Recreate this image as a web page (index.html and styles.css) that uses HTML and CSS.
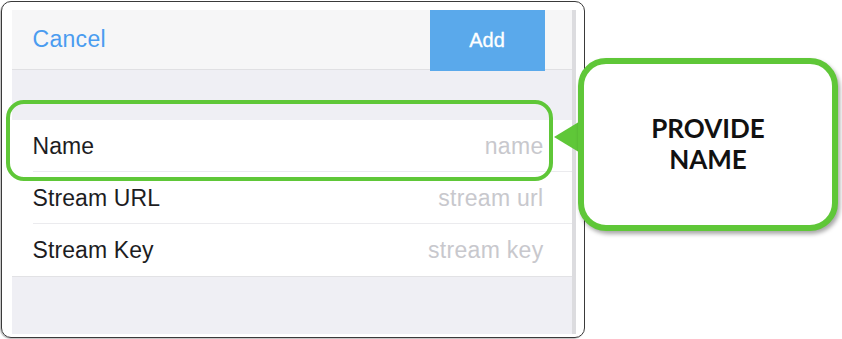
FILE: index.html
```html
<!DOCTYPE html>
<html>
<head>
<meta charset="utf-8">
<link rel="stylesheet" href="styles.css">
</head>
<body>
<div class="stage">
  <div class="frame">
    <div class="screen">
      <div class="nav">
        <span class="cancel">Cancel</span>
        <span class="add">Add</span>
      </div>
      <div class="gap"></div>
      <div class="list">
        <div class="row"><span class="label">Name</span><span class="ph">name</span></div>
        <div class="row"><span class="label">Stream URL</span><span class="ph">stream url</span></div>
        <div class="row last"><span class="label">Stream Key</span><span class="ph">stream key</span></div>
      </div>
      <div class="fill"></div>
    </div>
  </div>
  <div class="highlight"></div>
  <svg class="pointer" width="30" height="40" viewBox="0 0 30 40"><polygon points="0,18 28,1 28,35" fill="#5fc738"/></svg>
  <div class="callout"><p>PROVIDE<br>NAME</p></div>
</div>
</body>
</html>
```
FILE: styles.css
```css
html, body { margin: 0; padding: 0; background: #fff; }
.stage { position: relative; width: 842px; height: 339px; padding: 1px 0 0 1px; box-sizing: border-box; }
.frame {
  width: 584px; height: 337px; box-sizing: border-box;
  border: 1.5px solid #3a3a3a; border-radius: 10px;
  padding: 8px 0 0 9.5px;
  box-shadow: -1px 1px 1px rgba(0,0,0,0.25);
}
.screen {
  width: 564px; height: 324px; box-sizing: border-box;
  border-right: 4px solid #dcdcdf;
  display: flex; flex-direction: column;
  font-family: "Liberation Sans", Arial, sans-serif;
  background: #efeff4;
}
.nav {
  height: 60px; box-sizing: border-box; flex: none;
  background: #f6f6f7; border-bottom: 1.5px solid #e0e0e3;
  display: flex; align-items: stretch;
  padding-left: 21px;
}
.cancel { color: #4a9cf0; font-size: 23px; letter-spacing: 0.3px; align-self: center; }
.add {
  margin-left: auto; margin-right: 27px; width: 115px;
  background: #5aa9eb; color: #fff; font-size: 20px; font-weight: 400;
  -webkit-text-stroke: 0.3px #fff;
  display: flex; align-items: center; justify-content: center;
  margin-bottom: -1.5px;
}
.gap { height: 50px; flex: none; }
.list { background: #fff; border-bottom: 1.5px solid #e2e2e5; }
.row {
  height: 52px; display: flex; align-items: center; justify-content: space-between;
  padding: 0 28px 0 21px; position: relative;
}
.row::after {
  content: ""; position: absolute; left: 21px; right: 0; bottom: 0;
  height: 1px; background: #ebebee;
}
.row.last::after { display: none; }
.label { color: #1d1d1f; font-size: 23px; letter-spacing: 0.1px; }
.ph { color: #c8c8cd; font-size: 23px; letter-spacing: 0.3px; }
.fill { flex: 1; }
.highlight {
  position: absolute; left: 6px; top: 100px; width: 547px; height: 81px;
  box-sizing: border-box; border: 4px solid #5fc738; border-radius: 18px;
}
.pointer { position: absolute; left: 554px; top: 119px; }
.callout {
  position: absolute; left: 578px; top: 58px; width: 260px; height: 173px;
  box-sizing: border-box; background: #fff;
  border: 6px solid #5fc738; border-radius: 28px;
  box-shadow: 2px 3px 4px rgba(0,0,0,0.35);
  display: flex; align-items: center; justify-content: center;
}
.callout p {
  margin: 0; text-align: center;
  font-family: Lato, "Liberation Sans", sans-serif; font-weight: 700;
  font-size: 26px; line-height: 31px; color: #111;
  padding-bottom: 2px;
}
```
